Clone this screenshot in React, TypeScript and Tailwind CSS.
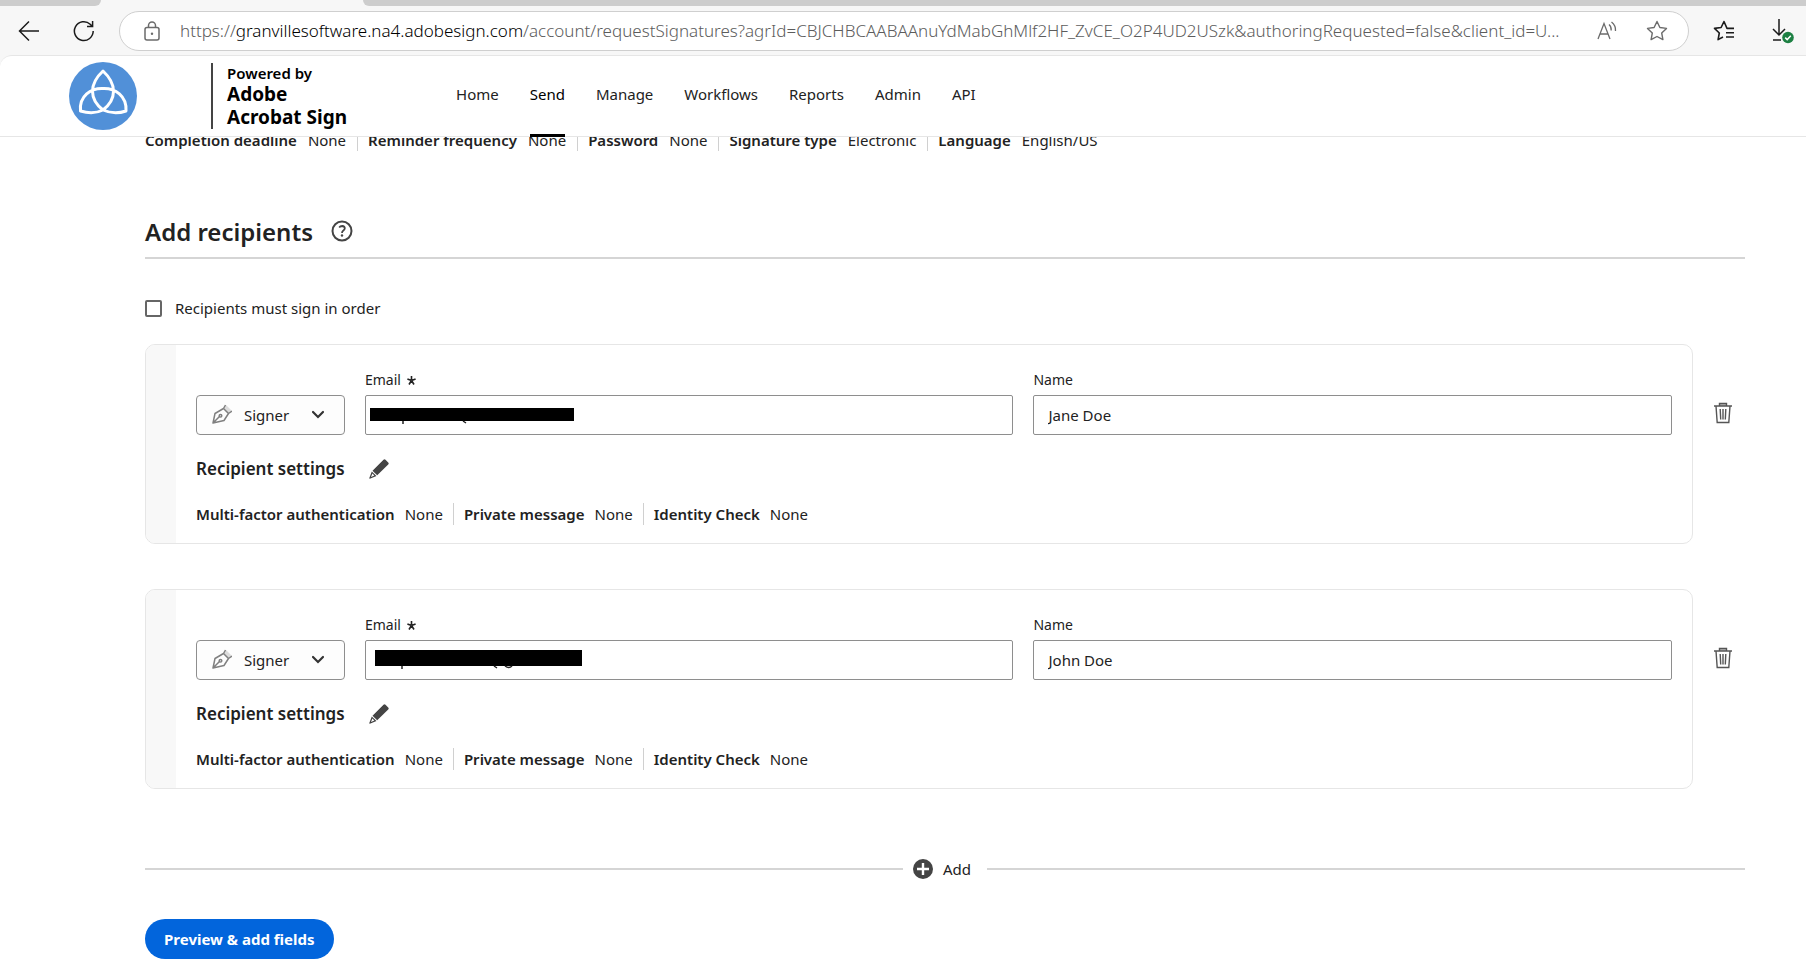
import React, { useState } from "react";

interface Recipient {
  id: number;
  name: string;
  bar: { className: string; width: number; height: number; marks: string };
}

interface Setting {
  label: string;
  value: string;
}

const NAV_ITEMS = ["Home", "Send", "Manage", "Workflows", "Reports", "Admin", "API"];

const AGREEMENT_SETTINGS: Setting[] = [
  { label: "Completion deadline", value: "None" },
  { label: "Reminder frequency", value: "None" },
  { label: "Password", value: "None" },
  { label: "Signature type", value: "Electronic" },
  { label: "Language", value: "English/US" }
];

const RECIPIENT_SETTINGS: Setting[] = [
  { label: "Multi-factor authentication", value: "None" },
  { label: "Private message", value: "None" },
  { label: "Identity Check", value: "None" }
];

const RECIPIENTS: Recipient[] = [
  { id: 1, name: "Jane Doe", bar: { className: "top-[13px] left-[5px]", width: 204, height: 13, marks: "M33 13v3M93 13l3 2" } },
  { id: 2, name: "John Doe", bar: { className: "top-[10px] left-[10px]", width: 207, height: 16, marks: "M27 16v3M119 16l3 2M130 16q4 3 7 0" } }
];

function SettingsRow({ items, wide = false }: { items: Setting[]; wide?: boolean }) {
  return (
    <dl className="flex items-center">
      {items.map((item, i) => (
        <div
          key={item.label}
          className={`flex h-[22px] items-center ${wide ? "gap-[11px] pr-[11px]" : "gap-[10px] pr-[10px]"} ${
            i > 0 ? "border-l border-[#d0d0d0] pl-[10px]" : ""
          }`}
        >
          <dt className="font-semibold">{item.label}</dt>
          <dd>{item.value}</dd>
        </div>
      ))}
    </dl>
  );
}

function BrowserBar() {
  return (
    <div className="bg-[#f7f7f7]">
      <div className="flex h-[6px]">
        <div className="w-[101px] rounded-br-lg bg-[#cdcdcd]" />
        <div className="w-[262px]" />
        <div className="flex-1 rounded-bl-lg bg-[#cdcdcd]" />
      </div>
      <div className="flex h-[49px] items-center pr-3">
        <button aria-label="Back" className="ml-[18px]">
          <svg width="22" height="22" viewBox="0 0 22 22" fill="none" stroke="#1b1b1b" strokeWidth="1.5">
            <path d="M21 11H1.500M11 1.500L1.500 11l9.500 9.500" />
          </svg>
        </button>
        <button aria-label="Refresh" className="ml-[33px]">
          <svg width="22" height="22" viewBox="0 0 22 22" fill="none" stroke="#1b1b1b" strokeWidth="1.5">
            <path d="M20.200 11a9.400 9.400 0 1 1-3-6.800l2 2M19.600 1v5.600H14" />
          </svg>
        </button>
        <div className="ml-6 flex h-10 min-w-0 flex-1 items-center rounded-full border border-[#cfcfcf] bg-white pr-5 pl-6">
          <svg className="shrink-0" width="16" height="20" viewBox="0 0 16 20" fill="none" stroke="#6b6b6b" strokeWidth="1.5">
            <rect x="1" y="6.5" width="14" height="12.5" rx="2" />
            <path d="M4.500 6.500V4.500a3.500 3.500 0 0 1 7 0v2" />
            <circle cx="8" cy="12.7" r="1.2" fill="#6b6b6b" stroke="none" />
          </svg>
          <div
            role="textbox"
            aria-label="Address"
            tabIndex={0}
            className="ml-5 min-w-0 flex-1 truncate text-[17px] font-light text-[#5c5c5c]"
          >
            https://<span className="text-black">granvillesoftware.na4.adobesign.com</span>
            /account/requestSignatures?agrId=CBJCHBCAABAAnuYdMabGhMlf2HF_ZvCE_O2P4UD2USzk&amp;authoringRequested=false&amp;client_id=U...
          </div>
          <button aria-label="Read aloud" className="ml-5">
            <svg width="20" height="20" viewBox="0 0 20 20" fill="none" stroke="#6b6b6b" strokeWidth="1.3">
              <path d="M1 18L7 2.500 13 18M3 13h8M12 3.500q2.500 2 2.200 6M14.500 1q4.500 3.500 4 9" />
            </svg>
          </button>
          <button aria-label="Add to favorites" className="ml-[29px]">
            <svg width="22" height="22" viewBox="0 0 22 22" fill="none" stroke="#6b6b6b" strokeWidth="1.4" strokeLinejoin="round">
              <path d="M11 1.500l2.900 6 6.600.9-4.800 4.600 1.200 6.600-5.900-3.100-5.900 3.100 1.200-6.600L1.500 8.400l6.600-.9z" />
            </svg>
          </button>
        </div>
        <button aria-label="Favorites" className="ml-6">
          <svg width="22" height="22" viewBox="0 0 22 22" fill="none" stroke="#1b1b1b" strokeWidth="1.6" strokeLinejoin="round">
            <path d="M21 8.400h-7L11 1.500 8.100 7.500l-6.600.9 4.800 4.600-1.200 6.600 4.900-2.600M13 12.700h8M13 17h8" />
          </svg>
        </button>
        <button aria-label="Downloads" className="ml-[37px]">
          <svg width="22" height="26" viewBox="0 0 22 26" fill="none">
            <path d="M7 1v16M1 11l6 6 6-6M1 22h8" stroke="#1b1b1b" strokeWidth="1.5" />
            <circle cx="16" cy="19.5" r="5.8" fill="#1d8043" />
            <path d="M13.200 19.600l2 2 3.600-3.800" stroke="#fff" strokeWidth="1.5" />
          </svg>
        </button>
      </div>
    </div>
  );
}

function Header() {
  return (
    <header className="relative z-10 flex h-[82px] items-stretch rounded-tl-xl border-t border-b border-[#e6e6e6] bg-white pl-[69px]">
      <svg className="mt-[6px]" width="68" height="68" viewBox="0 0 68 68" fill="none">
        <circle cx="34" cy="34" r="34" fill="#5190d8" />
        <path
          d="M34 9C20 22 20 37 34 48C43 52 51 51 57 49C58 34 46 26 34 26.500C22 26 10 34 11.500 49C18 51 26 52 34 48C48 37 48 22 34 9Z"
          stroke="#fff"
          strokeWidth="3"
          strokeLinejoin="round"
        />
      </svg>
      <p className="my-[7px] ml-[74px] border-l-2 border-[#444] pl-[14px] text-[19px] leading-[23px] font-bold text-black">
        <span className="block text-[15px] leading-5 font-semibold">Powered by</span>
        Adobe
        <br />
        Acrobat Sign
      </p>
      <nav className="ml-[109px] flex items-stretch gap-[31px]">
        {NAV_ITEMS.map((item) => (
          <a
            key={item}
            href={`#${item.toLowerCase()}`}
            className={`relative flex items-center pb-1 ${item === "Send" ? "text-black" : ""}`}
          >
            {item}
            {item === "Send" && <span className="absolute inset-x-0 -bottom-px h-[3px] bg-black" />}
          </a>
        ))}
      </nav>
    </header>
  );
}

function RecipientCard({ recipient }: { recipient: Recipient }) {
  const [name, setName] = useState(recipient.name);
  const [email, setEmail] = useState("");
  const { bar } = recipient;

  return (
    <div className="flex items-start">
      <section className="flex flex-1 overflow-hidden rounded-[10px] border border-[#e6e6e6]">
        <div className="w-[30px] bg-[#f8f8f8]" />
        <div className="flex-1 px-5 pb-[18px]">
          <div className="flex items-end gap-5 pt-6">
            <div className="relative w-[149px]">
              <select
                aria-label="Role"
                className="h-10 w-full appearance-none rounded border border-[#8e8e8e] bg-[#fdfdfd] pl-[47px]"
              >
                <option>Signer</option>
              </select>
              <svg className="pointer-events-none absolute top-[9px] left-4" width="20" height="20" viewBox="0 0 20 20" fill="none" stroke="#808080" strokeWidth="1.5" strokeLinejoin="round">
                <path d="M12 4.500L16.500 9l3-2.500L14 1z" fill="#dcdcdc" stroke="none" />
                <path d="M1 19L3 9.500l8.500-5 5 5-4.500 7zM1 19l6.500-6.500M11.500 4.500L13.500 1M16.500 9.500l3.500-2.500" />
                <circle cx="8.5" cy="11.7" r="1.3" />
              </svg>
              <svg className="pointer-events-none absolute top-[15px] right-5" width="14" height="9" viewBox="0 0 14 9" fill="none" stroke="#333" strokeWidth="2.2" strokeLinecap="round">
                <path d="M2 2l5 5 5-5" />
              </svg>
            </div>
            <div className="grid flex-1 grid-cols-[65fr_64fr] gap-5">
              <div>
                <label htmlFor={`email-${recipient.id}`} className="flex h-[26px] items-start gap-[6px] text-sm leading-[22px]">
                  Email
                  <svg className="mt-[7px]" width="9" height="9" viewBox="0 0 9 9" stroke="#222" strokeWidth="1.6">
                    <path d="M4.500 4.500V0M4.500 4.500L.4 3M4.500 4.500L8.600 3M4.500 4.500L2 8.500M4.500 4.500L7 8.500" />
                  </svg>
                </label>
                <div className="relative">
                  <input
                    id={`email-${recipient.id}`}
                    type="email"
                    value={email}
                    onChange={(e) => setEmail(e.target.value)}
                    className="block h-10 w-full rounded-xs border border-[#8e8e8e] px-[14px]"
                  />
                  <svg className={`absolute ${bar.className}`} width={bar.width} height={bar.height + 3} fill="none">
                    <rect width={bar.width} height={bar.height} fill="#000" />
                    <path d={bar.marks} stroke="#222" strokeWidth="1.5" />
                  </svg>
                </div>
              </div>
              <div>
                <label htmlFor={`name-${recipient.id}`} className="flex h-[26px] items-start text-sm leading-[22px]">
                  Name
                </label>
                <input
                  id={`name-${recipient.id}`}
                  type="text"
                  value={name}
                  onChange={(e) => setName(e.target.value)}
                  className="block h-10 w-full rounded-xs border border-[#8e8e8e] px-[14px]"
                />
              </div>
            </div>
          </div>
          <div className="mt-5 flex h-7 items-center gap-6">
            <h3 className="text-[17px] font-semibold">Recipient settings</h3>
            <button aria-label="Edit recipient settings">
              <svg width="20" height="20" viewBox="0 0 20 20" fill="#444">
                <path d="M14.500.8q1-1 2 0l2.700 2.700q1 1 0 2L8.200 16.300 3.500 11.700zM2.800 12.500L7.500 17.100 0.800 19.700q-.6 0-.5-.6zM3.400 14.600L2 18l3.300-1.400z" fillRule="evenodd" />
              </svg>
            </button>
          </div>
          <div className="mt-5">
            <SettingsRow items={RECIPIENT_SETTINGS} />
          </div>
        </div>
      </section>
      <button aria-label="Remove recipient" className="mt-[58px] mr-3 ml-5">
        <svg width="20" height="22" viewBox="0 0 20 22" fill="none" stroke="#555" strokeWidth="1.4">
          <path d="M6.500 4V1.500h7V4" fill="#bbb" />
          <path d="M1 4h18M3 4l1.200 16.500h11.600L17 4M7.200 7l.5 10.500M10 7v10.500M12.800 7l-.5 10.500" />
        </svg>
      </button>
    </div>
  );
}

export default function App() {
  const [ordered, setOrdered] = useState(false);

  return (
    <div className="min-h-screen bg-white font-['Noto_Sans',sans-serif] text-[15px] leading-[22px] text-[#222]">
      <BrowserBar />
      <div className="bg-[#f7f7f7]">
        <Header />
      </div>
      <main className="-mt-2 pr-[61px] pb-3 pl-[145px]">
        <SettingsRow items={AGREEMENT_SETTINGS} wide />
        <div className="mt-[63px] flex h-[45px] items-start gap-[18px] border-b-2 border-[#d5d5d5]">
          <h2 className="text-[24px] leading-9 font-semibold">Add recipients</h2>
          <button aria-label="Help" className="mt-[6px]">
            <svg width="22" height="22" viewBox="0 0 22 22" fill="none" stroke="#444" strokeWidth="2">
              <circle cx="11" cy="11" r="9.5" />
              <path d="M8.200 7.500q1-1.500 3-1.500 2.600.2 2.600 2.300 0 1.200-1.400 2.200-1.400 1-1.400 2.500" strokeWidth="1.8" />
              <circle cx="11" cy="15.5" r="1.2" fill="#444" stroke="none" />
            </svg>
          </button>
        </div>
        <label className="mt-[38px] flex items-center gap-[13px]">
          <input
            type="checkbox"
            checked={ordered}
            onChange={(e) => setOrdered(e.target.checked)}
            className="h-[17px] w-[17px] appearance-none rounded-xs border-2 border-[#666] checked:bg-[#666]"
          />
          Recipients must sign in order
        </label>
        <div className="mt-[25px] flex flex-col gap-[45px]">
          {RECIPIENTS.map((r) => (
            <RecipientCard key={r.id} recipient={r} />
          ))}
        </div>
        <div className="mt-[69px] flex items-center">
          <div className="h-[2px] flex-1 bg-[#d5d5d5]" />
          <button className="mr-4 ml-[10px] flex items-center gap-[10px]">
            <svg width="20" height="20" viewBox="0 0 20 20">
              <circle cx="10" cy="10" r="10" fill="#444" />
              <path d="M10 4v12M4 10h12" stroke="#fff" strokeWidth="2.4" />
            </svg>
            Add
          </button>
          <div className="h-[2px] flex-1 bg-[#d5d5d5]" />
        </div>
        <button className="mt-[39px] h-10 rounded-full bg-[#0265dc] px-[19px] font-bold text-white">
          Preview &amp; add fields
        </button>
      </main>
    </div>
  );
}
